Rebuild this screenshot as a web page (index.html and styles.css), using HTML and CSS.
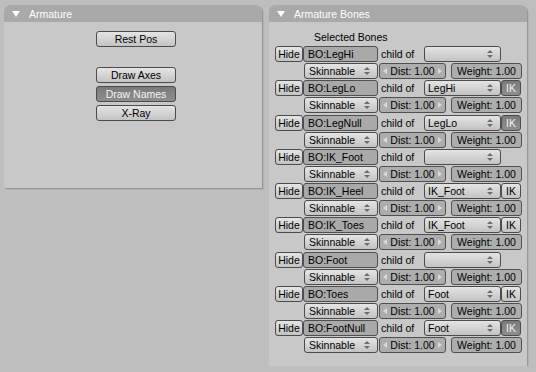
FILE: index.html
```html
<!DOCTYPE html>
<html lang="en">
<head>
  <meta charset="UTF-8">
  <meta name="viewport" content="width=device-width, initial-scale=1.0">
  <title>Armature - Edit Buttons</title>
  <link rel="stylesheet" href="styles.css">
</head>
<body>
  <div class="window">
    <div class="panel panel-armature">
      <div class="panel-header">
        <svg class="tri" width="8" height="6" viewBox="0 0 8 6"><path d="M0 0 H8 L4 6 Z" fill="#fff"/></svg>
        <span>Armature</span>
      </div>
      <div class="panel-body arm-body">
        <div class="btn wide">Rest Pos</div>
        <div class="btn-stack">
          <div class="btn wide">Draw Axes</div>
          <div class="btn wide pressed">Draw Names</div>
          <div class="btn wide">X-Ray</div>
        </div>
      </div>
    </div>

    <div class="panel panel-bones">
      <div class="panel-header">
        <svg class="tri" width="8" height="6" viewBox="0 0 8 6"><path d="M0 0 H8 L4 6 Z" fill="#fff"/></svg>
        <span>Armature Bones</span>
      </div>
      <div class="panel-body bones-body">
        <div class="label">Selected Bones</div>
        <div class="bones">

          <div class="bone">
            <div class="row">
              <div class="btn hide">Hide</div>
              <div class="field name">BO:LegHi</div>
              <span class="childof">child of</span>
              <div class="btn menu parent"></div>
            </div>
            <div class="row sub">
              <div class="btn menu skin">Skinnable</div>
              <div class="field dist">Dist: 1.00</div>
              <div class="field weight">Weight: 1.00</div>
            </div>
          </div>

          <div class="bone">
            <div class="row">
              <div class="btn hide">Hide</div>
              <div class="field name">BO:LegLo</div>
              <span class="childof">child of</span>
              <div class="btn menu parent">LegHi</div>
              <div class="btn ik on">IK</div>
            </div>
            <div class="row sub">
              <div class="btn menu skin">Skinnable</div>
              <div class="field dist">Dist: 1.00</div>
              <div class="field weight">Weight: 1.00</div>
            </div>
          </div>

          <div class="bone">
            <div class="row">
              <div class="btn hide">Hide</div>
              <div class="field name">BO:LegNull</div>
              <span class="childof">child of</span>
              <div class="btn menu parent">LegLo</div>
              <div class="btn ik on">IK</div>
            </div>
            <div class="row sub">
              <div class="btn menu skin">Skinnable</div>
              <div class="field dist">Dist: 1.00</div>
              <div class="field weight">Weight: 1.00</div>
            </div>
          </div>

          <div class="bone">
            <div class="row">
              <div class="btn hide">Hide</div>
              <div class="field name">BO:IK_Foot</div>
              <span class="childof">child of</span>
              <div class="btn menu parent"></div>
            </div>
            <div class="row sub">
              <div class="btn menu skin">Skinnable</div>
              <div class="field dist">Dist: 1.00</div>
              <div class="field weight">Weight: 1.00</div>
            </div>
          </div>

          <div class="bone">
            <div class="row">
              <div class="btn hide">Hide</div>
              <div class="field name">BO:IK_Heel</div>
              <span class="childof">child of</span>
              <div class="btn menu parent">IK_Foot</div>
              <div class="btn ik">IK</div>
            </div>
            <div class="row sub">
              <div class="btn menu skin">Skinnable</div>
              <div class="field dist">Dist: 1.00</div>
              <div class="field weight">Weight: 1.00</div>
            </div>
          </div>

          <div class="bone">
            <div class="row">
              <div class="btn hide">Hide</div>
              <div class="field name">BO:IK_Toes</div>
              <span class="childof">child of</span>
              <div class="btn menu parent">IK_Foot</div>
              <div class="btn ik">IK</div>
            </div>
            <div class="row sub">
              <div class="btn menu skin">Skinnable</div>
              <div class="field dist">Dist: 1.00</div>
              <div class="field weight">Weight: 1.00</div>
            </div>
          </div>

          <div class="bone">
            <div class="row">
              <div class="btn hide">Hide</div>
              <div class="field name">BO:Foot</div>
              <span class="childof">child of</span>
              <div class="btn menu parent"></div>
            </div>
            <div class="row sub">
              <div class="btn menu skin">Skinnable</div>
              <div class="field dist">Dist: 1.00</div>
              <div class="field weight">Weight: 1.00</div>
            </div>
          </div>

          <div class="bone">
            <div class="row">
              <div class="btn hide">Hide</div>
              <div class="field name">BO:Toes</div>
              <span class="childof">child of</span>
              <div class="btn menu parent">Foot</div>
              <div class="btn ik">IK</div>
            </div>
            <div class="row sub">
              <div class="btn menu skin">Skinnable</div>
              <div class="field dist">Dist: 1.00</div>
              <div class="field weight">Weight: 1.00</div>
            </div>
          </div>

          <div class="bone">
            <div class="row">
              <div class="btn hide">Hide</div>
              <div class="field name">BO:FootNull</div>
              <span class="childof">child of</span>
              <div class="btn menu parent">Foot</div>
              <div class="btn ik on">IK</div>
            </div>
            <div class="row sub">
              <div class="btn menu skin">Skinnable</div>
              <div class="field dist">Dist: 1.00</div>
              <div class="field weight">Weight: 1.00</div>
            </div>
          </div>

        </div>
      </div>
    </div>
  </div>
</body>
</html>
```

FILE: styles.css
```css
body {
  margin: 0;
  background-color: #bebebe;
  font-family: "Liberation Sans", Arial, sans-serif;
  font-size: 10.5px;
  color: #000;
}

.window {
  display: flex;
  align-items: flex-start;
  gap: 7px;
  padding: 5px 0 0 4px;
}

.panel {
  width: 258px;
  background-color: #c8c8c8;
  border-radius: 6px 6px 0 0;
  box-shadow: 1px 1px 0 #979797, 2px 2px 0 #b2b2b2;
}

.panel-header {
  display: flex;
  align-items: center;
  height: 17px;
  padding-left: 8px;
  background-color: #a9a9a9;
  border-radius: 6px 6px 0 0;
  color: #fff;
}

.tri {
  margin-right: 9px;
  margin-top: 1px;
}

.panel-body {
  box-sizing: border-box;
}

/* left panel */
.arm-body {
  height: 166px;
  padding: 9px 0 0 92px;
}

.btn-stack {
  display: flex;
  flex-direction: column;
  gap: 3px;
  margin-top: 20px;
}

.btn {
  box-sizing: border-box;
  height: 16px;
  border: 1px solid #4c4c4c;
  border-radius: 3px;
  background: linear-gradient(#e4e4e4, #c3c3c3);
  text-align: center;
  line-height: 14px;
  white-space: nowrap;
}

.btn.wide {
  width: 80px;
}

.btn.pressed,
.btn.ik.on {
  background: linear-gradient(#7a7a7a, #8e8e8e);
  color: #f4f4f4;
}

/* right panel */
.bones-body {
  height: 344px;
  padding-top: 7px;
}

.label {
  height: 16px;
  line-height: 16px;
  padding-left: 45px;
  margin-bottom: 1px;
}

.bones {
  display: flex;
  flex-direction: column;
  gap: 1.3px;
}

.bone {
  display: flex;
  flex-direction: column;
  gap: 1px;
}

.row {
  display: flex;
  height: 16px;
  padding-left: 6px;
}

.row.sub {
  padding-left: 35px;
}

.field {
  box-sizing: border-box;
  height: 16px;
  border: 1px solid #505050;
  border-radius: 3px;
  background-color: #a9a9a9;
  line-height: 14px;
  white-space: nowrap;
}

.hide {
  width: 28px;
}

.name {
  width: 75px;
  padding-left: 4px;
}

.childof {
  width: 43px;
  margin-left: 3px;
  line-height: 16px;
}

.menu {
  position: relative;
  text-align: left;
  padding-left: 3px;
}

.menu::before,
.menu::after {
  content: "";
  position: absolute;
  right: 7px;
  width: 0;
  height: 0;
  border-left: 3px solid transparent;
  border-right: 3px solid transparent;
}

.menu::before {
  top: 3px;
  border-bottom: 3px solid #6c6c6c;
}

.menu::after {
  top: 8px;
  border-top: 3px solid #6c6c6c;
}

.parent {
  width: 77px;
}

.ik {
  width: 20px;
}

.skin {
  width: 74px;
  padding-left: 4px;
}

.dist {
  position: relative;
  width: 67px;
  margin-left: 1px;
  text-align: center;
  background-color: #adadad;
}

.dist::before,
.dist::after {
  content: "";
  position: absolute;
  top: 4px;
  width: 0;
  height: 0;
  border-top: 3px solid transparent;
  border-bottom: 3px solid transparent;
}

.dist::before {
  left: 3px;
  border-right: 4px solid #dadada;
}

.dist::after {
  right: 3px;
  border-left: 4px solid #dadada;
}

.weight {
  width: 71px;
  margin-left: 5px;
  text-align: center;
  background-color: #adadad;
}
```
